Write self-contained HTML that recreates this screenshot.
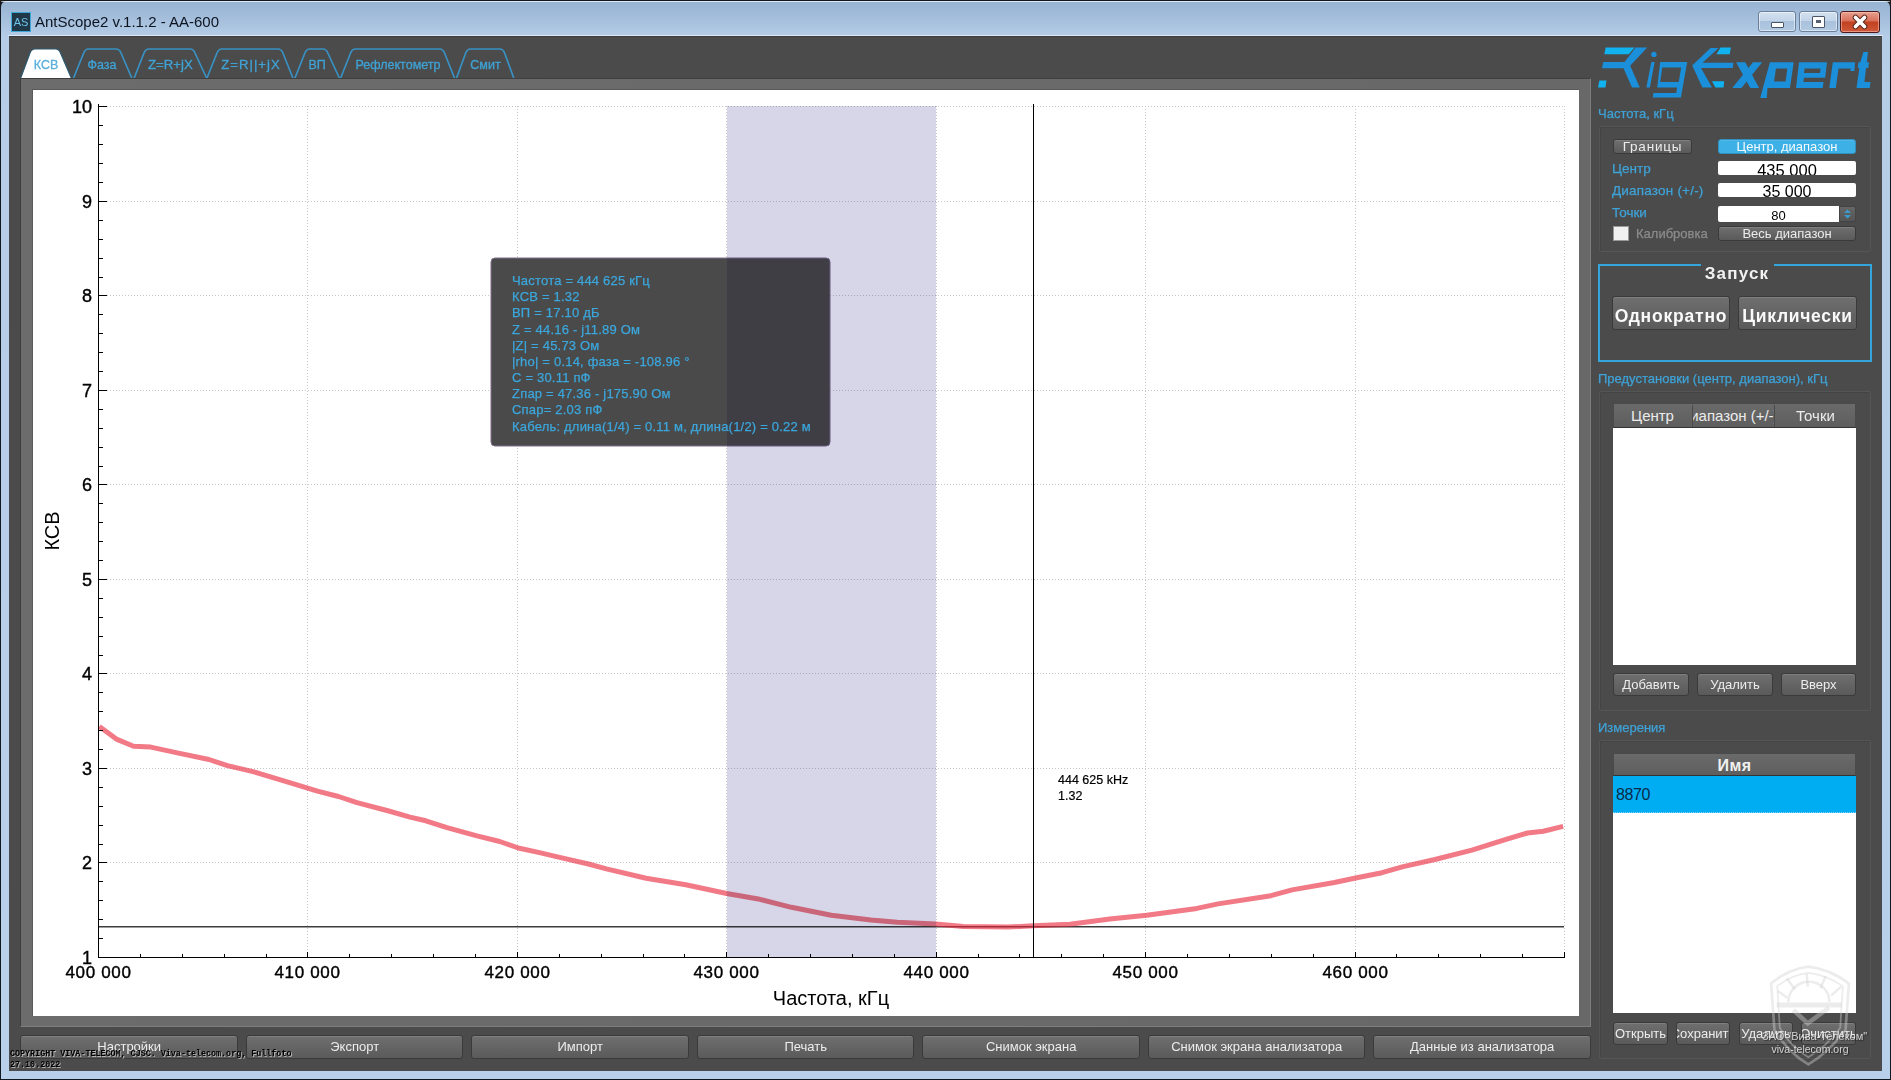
<!DOCTYPE html><html><head><meta charset="utf-8"><style>
*{margin:0;padding:0;box-sizing:border-box}
html,body{width:1891px;height:1080px;overflow:hidden;background:#1a1a1a}
body{position:relative;font-family:"Liberation Sans",sans-serif}
.a{position:absolute}
.btn{position:absolute;display:flex;justify-content:center;border:1px solid #3a3a3a;border-radius:3px;background:linear-gradient(#6f6f6f,#5a5a5a);color:#ececec;text-align:center;white-space:nowrap;overflow:hidden;box-shadow:inset 0 1px 0 rgba(255,255,255,0.12)}
.lbl{position:absolute;color:#3ea3d8;white-space:nowrap;-webkit-text-stroke:0.25px currentColor}
</style></head><body><div class="a" style="left:0;top:0;width:1891px;height:1080px;border:1px solid #101820;border-radius:7px 7px 0 0;background:linear-gradient(#97b3d3 0px,#a6c0dd 20px,#b5cde7 36px,#b8d0e9 100%)"></div><div class="a" style="left:1px;top:1px;width:1889px;height:1px;background:rgba(255,255,255,0.7);border-radius:6px 6px 0 0"></div><div class="a" style="left:8px;top:35px;width:1875px;height:1px;background:rgba(225,236,248,0.9)"></div><div class="a" style="left:9px;top:36px;width:1873px;height:1035px;background:#4b4b4b;border-top:1px solid #3c3c3c"></div><div class="a" style="left:11px;top:12px;width:20px;height:20px;background:#1f3746;border:1px solid #3fa6d8"></div><div class="a" style="left:11px;top:12px;width:20px;height:20px;color:#6ec3ea;font-size:11px;line-height:20px;text-align:center">AS</div><div class="a" style="left:35px;top:13px;color:#0c1420;font-size:15px;line-height:18px;white-space:nowrap">AntScope2 v.1.1.2 - AA-600</div><div class="a" style="left:1758px;top:11px;width:38px;height:21px;border:1px solid #6a7f99;border-radius:3px;background:linear-gradient(#d3e1f0 0%,#c3d5e9 45%,#a9c1dc 50%,#b3cae3 100%);box-shadow:inset 0 0 0 1px rgba(255,255,255,0.5)"></div><div class="a" style="left:1771px;top:22px;width:13px;height:6px;background:#fff;border:1px solid #4a5668;border-radius:1px"></div><div class="a" style="left:1799px;top:11px;width:39px;height:21px;border:1px solid #6a7f99;border-radius:3px;background:linear-gradient(#d3e1f0 0%,#c3d5e9 45%,#a9c1dc 50%,#b3cae3 100%);box-shadow:inset 0 0 0 1px rgba(255,255,255,0.5)"></div><div class="a" style="left:1812px;top:16px;width:13px;height:12px;background:#fff;border:1px solid #4a5668;border-radius:1px"></div><div class="a" style="left:1816px;top:20px;width:5px;height:3px;background:#556070"></div><div class="a" style="left:1840px;top:11px;width:40px;height:22px;border:1px solid #4a1a1a;border-radius:3px;background:linear-gradient(#e8a08e 0%,#d9705a 45%,#c2401f 50%,#d05a3a 100%);box-shadow:inset 0 0 0 1px rgba(255,210,200,0.5)"></div><svg class="a" style="left:1840px;top:11px" width="40" height="22"><path d="M15.5 6.5 L24.5 15.5 M24.5 6.5 L15.5 15.5" stroke="#5a2a20" stroke-width="5.6" stroke-linecap="round"/><path d="M15.5 6.5 L24.5 15.5 M24.5 6.5 L15.5 15.5" stroke="#fff" stroke-width="3.6" stroke-linecap="round"/></svg><svg class="a" style="left:0;top:0" width="600" height="90"><path d="M20.5,78.5 L30,53 Q31.5,49 35,49 L55.5,49 Q59.0,49 60.5,53 L71.5,78.5 Z" fill="#ffffff" stroke="#2c5a70" stroke-width="1.2"/><path d="M73.4,78.5 L83.7,53 Q85.2,49 88.7,49 L116,49 Q119.5,49 121,53 L132,78.5" fill="none" stroke="#3891c2" stroke-width="1.7"/><path d="M134,78.5 L144,53 Q145.5,49 149,49 L190,49 Q193.5,49 195,53 L206.8,78.5" fill="none" stroke="#3891c2" stroke-width="1.7"/><path d="M206.8,78.5 L217,53 Q218.5,49 222,49 L277.9,49 Q281.4,49 282.9,53 L293.1,78.5" fill="none" stroke="#3891c2" stroke-width="1.7"/><path d="M294.8,78.5 L304.9,53 Q306.4,49 309.9,49 L322.8,49 Q326.3,49 327.8,53 L339.6,78.5" fill="none" stroke="#3891c2" stroke-width="1.7"/><path d="M340.5,78.5 L350.6,53 Q352.1,49 355.6,49 L439.5,49 Q443.0,49 444.5,53 L454.7,78.5" fill="none" stroke="#3891c2" stroke-width="1.7"/><path d="M456.4,78.5 L465.7,53 Q467.2,49 470.7,49 L499.6,49 Q503.1,49 504.6,53 L513.9,78.5" fill="none" stroke="#3891c2" stroke-width="1.7"/><text x="46" y="68.8" text-anchor="middle" font-family="Liberation Sans" font-size="12.5" fill="#5bb0dc" stroke="#5bb0dc" stroke-width="0.3">КСВ</text><text x="102" y="68.8" text-anchor="middle" font-family="Liberation Sans" font-size="12.5" fill="#3fa3d6" stroke="#3fa3d6" stroke-width="0.3">Фаза</text><text x="170.4" y="68.8" text-anchor="middle" font-family="Liberation Sans" font-size="13.2" fill="#3fa3d6" stroke="#3fa3d6" stroke-width="0.3">Z=R+jX</text><text x="251" y="68.8" text-anchor="middle" font-family="Liberation Sans" font-size="13.2" letter-spacing="1" fill="#3fa3d6" stroke="#3fa3d6" stroke-width="0.3">Z=R||+jX</text><text x="317.1" y="68.8" text-anchor="middle" font-family="Liberation Sans" font-size="12.5" fill="#3fa3d6" stroke="#3fa3d6" stroke-width="0.3">ВП</text><text x="398" y="68.8" text-anchor="middle" font-family="Liberation Sans" font-size="12.5" fill="#3fa3d6" stroke="#3fa3d6" stroke-width="0.3">Рефлектометр</text><text x="485.5" y="68.8" text-anchor="middle" font-family="Liberation Sans" font-size="12.5" fill="#3fa3d6" stroke="#3fa3d6" stroke-width="0.3">Смит</text></svg><div class="a" style="left:20px;top:78px;width:1571px;height:949px;background:linear-gradient(90deg,#6c6c6c,#686868);border:1px solid #3e3e3e;border-right-color:#7e7e7e;border-bottom-color:#7e7e7e"></div><div class="a" style="left:32px;top:89px;width:1547px;height:927px;background:#5a5a5a"></div><div class="a" style="left:33px;top:90px;width:1546px;height:926px;background:#ffffff"></div><svg class="a" style="left:0;top:0" width="1600" height="1030" font-family="Liberation Sans"><path d="M107,862.5 H1565 M107,768.5 H1565 M107,673.5 H1565 M107,579.5 H1565 M107,484.5 H1565 M107,390.5 H1565 M107,295.5 H1565 M107,201.5 H1565 M107,106.5 H1565 M307.5,106 V952 M517.5,106 V952 M726.5,106 V952 M936.5,106 V952 M1145.5,106 V952 M1355.5,106 V952 M1564.5,106 V952" stroke="#c8c8c8" stroke-width="1" stroke-dasharray="1 2" fill="none" shape-rendering="crispEdges"/><path d="M98,926.7 H1564" stroke="#3c3c3c" stroke-width="1.6" fill="none"/><polyline points="99.3,726.4 116.4,739.1 133.6,746.3 150.8,747.1 177.3,752.9 209,759.5 227.5,765.6 254,771.9 296.2,784.6 317.4,791.2 338.5,796.5 357,802.6 388.8,811 410,817.1 425.8,820.8 447,827.7 476,835.6 499.8,841.5 518.3,848 539.5,852.6 560.7,857.6 588.4,864 606.4,868.9 646.1,878.2 685.8,884.8 726.7,893.5 759.8,899.3 791.5,907.3 831.2,915.2 870.9,920 897.3,922.3 935.6,923.9 963.4,926.6 1008.3,927.1 1033.5,925.8 1070,924.3 1109.7,919 1146.7,915.3 1196.9,908.4 1218,903.9 1271,895.7 1292.1,889.9 1334.4,882.5 1355.6,878 1382,872.7 1403.2,866.6 1434.9,859.5 1471.9,850.2 1503.6,840.2 1527.4,833 1543.3,831.2 1563.1,826.4" fill="none" stroke="rgba(232,40,60,0.62)" stroke-width="5" stroke-linejoin="round" stroke-linecap="butt"/><path d="M1033.5,104 V957" stroke="#000" stroke-width="1" fill="none" shape-rendering="crispEdges"/><path d="M98.5,104 V958 M98,957.5 H1565 M98,957.5 H107 M98,938.5 H103 M98,919.5 H103 M98,900.5 H103 M98,881.5 H103 M98,862.5 H107 M98,844.5 H103 M98,825.5 H103 M98,806.5 H103 M98,787.5 H103 M98,768.5 H107 M98,749.5 H103 M98,730.5 H103 M98,711.5 H103 M98,692.5 H103 M98,673.5 H107 M98,655.5 H103 M98,636.5 H103 M98,617.5 H103 M98,598.5 H103 M98,579.5 H107 M98,560.5 H103 M98,541.5 H103 M98,522.5 H103 M98,503.5 H103 M98,484.5 H107 M98,466.5 H103 M98,447.5 H103 M98,428.5 H103 M98,409.5 H103 M98,390.5 H107 M98,371.5 H103 M98,352.5 H103 M98,333.5 H103 M98,314.5 H103 M98,295.5 H107 M98,277.5 H103 M98,258.5 H103 M98,239.5 H103 M98,220.5 H103 M98,201.5 H107 M98,182.5 H103 M98,163.5 H103 M98,144.5 H103 M98,125.5 H103 M98,106.5 H107 M98.5,957 V952 M140.5,957 V954 M182.5,957 V954 M224.5,957 V954 M266.5,957 V954 M307.5,957 V952 M349.5,957 V954 M391.5,957 V954 M433.5,957 V954 M475.5,957 V954 M517.5,957 V952 M559.5,957 V954 M601.5,957 V954 M643.5,957 V954 M684.5,957 V954 M726.5,957 V952 M768.5,957 V954 M810.5,957 V954 M852.5,957 V954 M894.5,957 V954 M936.5,957 V952 M978.5,957 V954 M1019.5,957 V954 M1061.5,957 V954 M1103.5,957 V954 M1145.5,957 V952 M1187.5,957 V954 M1229.5,957 V954 M1271.5,957 V954 M1313.5,957 V954 M1355.5,957 V952 M1396.5,957 V954 M1438.5,957 V954 M1480.5,957 V954 M1522.5,957 V954 M1564.5,957 V952" stroke="#000" stroke-width="1" fill="none" shape-rendering="crispEdges"/><text x="92" y="964.0" text-anchor="end" font-size="18" fill="#000" stroke="#000" stroke-width="0.4">1</text><text x="92" y="869.0" text-anchor="end" font-size="18" fill="#000" stroke="#000" stroke-width="0.4">2</text><text x="92" y="775.0" text-anchor="end" font-size="18" fill="#000" stroke="#000" stroke-width="0.4">3</text><text x="92" y="680.0" text-anchor="end" font-size="18" fill="#000" stroke="#000" stroke-width="0.4">4</text><text x="92" y="586.0" text-anchor="end" font-size="18" fill="#000" stroke="#000" stroke-width="0.4">5</text><text x="92" y="491.0" text-anchor="end" font-size="18" fill="#000" stroke="#000" stroke-width="0.4">6</text><text x="92" y="397.0" text-anchor="end" font-size="18" fill="#000" stroke="#000" stroke-width="0.4">7</text><text x="92" y="302.0" text-anchor="end" font-size="18" fill="#000" stroke="#000" stroke-width="0.4">8</text><text x="92" y="208.0" text-anchor="end" font-size="18" fill="#000" stroke="#000" stroke-width="0.4">9</text><text x="92" y="113.0" text-anchor="end" font-size="18" fill="#000" stroke="#000" stroke-width="0.4">10</text><text x="98.5" y="978" text-anchor="middle" font-size="17" letter-spacing="0.65" fill="#000" stroke="#000" stroke-width="0.4">400 000</text><text x="307.5" y="978" text-anchor="middle" font-size="17" letter-spacing="0.65" fill="#000" stroke="#000" stroke-width="0.4">410 000</text><text x="517.5" y="978" text-anchor="middle" font-size="17" letter-spacing="0.65" fill="#000" stroke="#000" stroke-width="0.4">420 000</text><text x="726.5" y="978" text-anchor="middle" font-size="17" letter-spacing="0.65" fill="#000" stroke="#000" stroke-width="0.4">430 000</text><text x="936.5" y="978" text-anchor="middle" font-size="17" letter-spacing="0.65" fill="#000" stroke="#000" stroke-width="0.4">440 000</text><text x="1145.5" y="978" text-anchor="middle" font-size="17" letter-spacing="0.65" fill="#000" stroke="#000" stroke-width="0.4">450 000</text><text x="1355.5" y="978" text-anchor="middle" font-size="17" letter-spacing="0.65" fill="#000" stroke="#000" stroke-width="0.4">460 000</text><text x="831" y="1005" text-anchor="middle" font-size="20" fill="#000">Частота, кГц</text><text transform="translate(59,531) rotate(-90)" text-anchor="middle" font-size="20" fill="#000">КСВ</text><text x="1058" y="783.5" font-size="12.5" fill="#000" stroke="#000" stroke-width="0.2">444 625 kHz</text><text x="1058" y="799.5" font-size="12.5" fill="#000" stroke="#000" stroke-width="0.2">1.32</text><rect x="491" y="258" width="339" height="188" rx="4" fill="#4a4a4a" stroke="#806c8c" stroke-width="1"/><rect x="727" y="106" width="209" height="851" fill="#d6d6e8" style="mix-blend-mode:multiply"/><text x="512" y="285.0" font-size="13" letter-spacing="0.2" fill="#3ba7dd" stroke="#3ba7dd" stroke-width="0.25">Частота = 444 625 кГц</text><text x="512" y="301.2" font-size="13" letter-spacing="0.2" fill="#3ba7dd" stroke="#3ba7dd" stroke-width="0.25">КСВ = 1.32</text><text x="512" y="317.4" font-size="13" letter-spacing="0.2" fill="#3ba7dd" stroke="#3ba7dd" stroke-width="0.25">ВП = 17.10 дБ</text><text x="512" y="333.5" font-size="13" letter-spacing="0.2" fill="#3ba7dd" stroke="#3ba7dd" stroke-width="0.25">Z = 44.16 - j11.89 Ом</text><text x="512" y="349.7" font-size="13" letter-spacing="0.2" fill="#3ba7dd" stroke="#3ba7dd" stroke-width="0.25">|Z| = 45.73 Ом</text><text x="512" y="365.9" font-size="13" letter-spacing="0.2" fill="#3ba7dd" stroke="#3ba7dd" stroke-width="0.25">|rho| = 0.14, фаза = -108.96 °</text><text x="512" y="382.1" font-size="13" letter-spacing="0.2" fill="#3ba7dd" stroke="#3ba7dd" stroke-width="0.25">C = 30.11 пФ</text><text x="512" y="398.3" font-size="13" letter-spacing="0.2" fill="#3ba7dd" stroke="#3ba7dd" stroke-width="0.25">Zпар = 47.36 - j175.90 Ом</text><text x="512" y="414.4" font-size="13" letter-spacing="0.2" fill="#3ba7dd" stroke="#3ba7dd" stroke-width="0.25">Cпар= 2.03 пФ</text><text x="512" y="430.6" font-size="13" letter-spacing="0.2" fill="#3ba7dd" stroke="#3ba7dd" stroke-width="0.25">Кабель: длина(1/4) = 0.11 м, длина(1/2) = 0.22 м</text></svg><div class="btn" style="left:20.4px;top:1035px;width:217.6px;height:24px;font-size:13px;line-height:22px">Настройки</div><div class="btn" style="left:245.9px;top:1035px;width:217.6px;height:24px;font-size:13px;line-height:22px">Экспорт</div><div class="btn" style="left:471.4px;top:1035px;width:217.6px;height:24px;font-size:13px;line-height:22px">Импорт</div><div class="btn" style="left:696.9px;top:1035px;width:217.6px;height:24px;font-size:13px;line-height:22px">Печать</div><div class="btn" style="left:922.4px;top:1035px;width:217.6px;height:24px;font-size:13px;line-height:22px">Снимок экрана</div><div class="btn" style="left:1147.9px;top:1035px;width:217.6px;height:24px;font-size:13px;line-height:22px">Снимок экрана анализатора</div><div class="btn" style="left:1373.4px;top:1035px;width:217.6px;height:24px;font-size:13px;line-height:22px">Данные из анализатора</div><div class="a" style="left:1599px;top:126px;width:272px;height:126px;border:1px solid #555;border-radius:2px;box-shadow:inset 1px 1px 0 #444"></div><div class="a" style="left:1599px;top:391px;width:272px;height:320px;border:1px solid #555;border-radius:2px;box-shadow:inset 1px 1px 0 #444"></div><div class="a" style="left:1599px;top:740px;width:272px;height:319px;border:1px solid #555;border-radius:2px;box-shadow:inset 1px 1px 0 #444"></div><div class="lbl" style="left:1598px;top:105px;height:18px;line-height:18px;font-size:13px;color:#3ea3d8;">Частота, кГц</div><div class="btn" style="left:1613px;top:139px;width:79px;height:15px;font-size:13.5px;line-height:13px;letter-spacing:0.8px">Границы</div><div class="btn" style="left:1718px;top:139px;width:138px;height:15px;font-size:13px;line-height:13px;background:#3db0e6;border-color:#2f8fbf;color:#f4fbff">Центр, диапазон</div><div class="lbl" style="left:1612px;top:160px;height:18px;line-height:18px;font-size:13.5px;color:#3ea3d8;">Центр</div><div class="a" style="left:1718px;top:161px;width:138px;height:14px;background:#fff;border-radius:2px;overflow:hidden;text-align:center;font-size:16.5px;line-height:19px;color:#000">435 000</div><div class="lbl" style="left:1612px;top:181.5px;height:18px;line-height:18px;font-size:13.5px;color:#3ea3d8;letter-spacing:0.2px">Диапазон (+/-)</div><div class="a" style="left:1718px;top:183px;width:138px;height:14px;background:#fff;border-radius:2px;overflow:hidden;text-align:center;font-size:16px;line-height:17px;color:#000">35 000</div><div class="lbl" style="left:1612px;top:203.5px;height:18px;line-height:18px;font-size:13.5px;color:#3ea3d8;">Точки</div><div class="a" style="left:1718px;top:206px;width:121px;height:16px;background:#fff;border-radius:2px 0 0 2px;overflow:hidden;text-align:center;font-size:13px;line-height:20px;color:#000">80</div><div class="a" style="left:1839px;top:206px;width:17px;height:16px;background:linear-gradient(#666,#555);border:1px solid #444;border-radius:0 2px 2px 0"></div><svg class="a" style="left:1839px;top:206px" width="17" height="16"><path d="M5 7 L8.5 3.5 L12 7 Z M5 9 L8.5 12.5 L12 9 Z" fill="#3a9ccc"/></svg><div class="a" style="left:1613px;top:226px;width:16px;height:15px;background:#f0f0f0;border:1px solid #999"></div><div class="lbl" style="left:1636px;top:225px;height:18px;line-height:18px;font-size:13px;color:#8c8c8c;">Калибровка</div><div class="btn" style="left:1718px;top:226px;width:138px;height:15px;font-size:13px;line-height:13px;">Весь диапазон</div><div class="a" style="left:1598px;top:264px;width:274px;height:98px;border:2px solid #35a6dc"></div><div class="a" style="left:1701px;top:262px;width:73px;height:5px;background:#4b4b4b"></div><div class="a" style="left:1637px;top:264px;width:200px;text-align:center;font-size:17px;font-weight:bold;letter-spacing:1.2px;color:#f2f2f2;line-height:20px">Запуск</div><div class="btn" style="left:1612px;top:296px;width:118px;height:34px;font-size:17.5px;line-height:32px;font-weight:bold;color:#fafafa;letter-spacing:0.8px;padding-top:3px">Однократно</div><div class="btn" style="left:1738px;top:296px;width:119px;height:34px;font-size:17.5px;line-height:32px;font-weight:bold;color:#fafafa;letter-spacing:0.7px;padding-top:3px">Циклически</div><div class="lbl" style="left:1598px;top:369.5px;height:18px;line-height:18px;font-size:13px;color:#3ea3d8;">Предустановки (центр, диапазон), кГц</div><div class="a" style="left:1613px;top:403px;width:243px;height:25px;background:linear-gradient(#6a6a6a,#5e5e5e);border:1px solid #4a4a4a;border-bottom:1px solid #333"></div><div class="a" style="left:1692px;top:405px;width:1px;height:22px;background:#4a4a4a"></div><div class="a" style="left:1774px;top:405px;width:1px;height:22px;background:#4a4a4a"></div><div class="a" style="left:1613px;top:404px;width:79px;height:23px;text-align:center;font-size:15px;line-height:24px;color:#ececec">Центр</div><div class="a" style="left:1693px;top:404px;width:81px;height:23px;overflow:hidden;font-size:15px;line-height:24px;color:#ececec;white-space:nowrap"><span style="position:absolute;left:-13px">Диапазон (+/-)</span></div><div class="a" style="left:1775px;top:404px;width:81px;height:23px;text-align:center;font-size:15px;line-height:24px;color:#ececec">Точки</div><div class="a" style="left:1613px;top:428px;width:243px;height:237px;background:#fff"></div><div class="btn" style="left:1613px;top:673px;width:76px;height:23px;font-size:13px;line-height:21px;">Добавить</div><div class="btn" style="left:1697px;top:673px;width:76px;height:23px;font-size:13px;line-height:21px;">Удалить</div><div class="btn" style="left:1781px;top:673px;width:75px;height:23px;font-size:13px;line-height:21px;">Вверх</div><div class="lbl" style="left:1598px;top:719px;height:18px;line-height:18px;font-size:13px;color:#3ea3d8;">Измерения</div><div class="a" style="left:1613px;top:753px;width:243px;height:23px;background:linear-gradient(#6a6a6a,#5e5e5e);border:1px solid #4a4a4a;border-bottom:1px solid #333;text-align:center;font-size:16px;font-weight:bold;letter-spacing:0.5px;line-height:23px;color:#f0f0f0">Имя</div><div class="a" style="left:1613px;top:776px;width:243px;height:37px;background:#00adf2;border-bottom:1px dotted #7fd6f8;font-size:16px;letter-spacing:-0.4px;line-height:38px;color:#0b2a4a;padding-left:3px">8870</div><div class="a" style="left:1613px;top:813px;width:243px;height:200px;background:#fff"></div><div class="btn" style="left:1613px;top:1022px;width:55px;height:23px;font-size:13px;line-height:21px;">Открыть</div><div class="btn" style="left:1676px;top:1022px;width:54px;height:23px;font-size:13px;line-height:21px;text-indent:0;">Сохранить</div><div class="btn" style="left:1739px;top:1022px;width:54px;height:23px;font-size:13px;line-height:21px;">Удалить</div><div class="btn" style="left:1801px;top:1022px;width:55px;height:23px;font-size:13px;line-height:21px;">Очистить</div><svg class="a" style="left:0;top:0" width="1891" height="110"><polygon points="1605.7,47.6 1634.6,47.6 1628.7,54.2 1604.3,54.2" fill="#10b3f0"/><polygon points="1603.3,62 1624.6,62 1635.6,47.6 1647.2,47.6 1630.2,65.7 1639.8,87.5 1632,87.5 1623.5,68.3 1602,68.3" fill="#1b8fd9"/><polygon points="1599.4,80.5 1606.5,80.5 1605.4,87.5 1598,87.5" fill="#10b3f0"/><circle cx="1653.9" cy="54.4" r="2.7" fill="#1b8fd9"/><polygon points="1651.3,62 1654.6,62 1649.9,87.5 1646.4,87.5" fill="#1b8fd9"/><path fill-rule="evenodd" fill="#1b8fd9" d="M1660.2,62 L1687.2,62 L1680.9,97.5 L1652.7,97.5 L1653.5,93.1 L1676.2,93.1 L1677.1,87.5 L1657.2,87.5 Z M1662.3,67.5 L1681.2,67.5 L1678.7,82 L1660.2,82 Z"/><polygon points="1710.5,47.9 1718.6,47.9 1702.5,62.7 1733.5,62.7 1732.8,67.9 1701,67.9 1712,87.5 1702.4,87.5 1692.2,65.5" fill="#1b8fd9"/><polygon points="1720.5,47.6 1730.9,47.6 1729.7,54.2 1716.4,54.2" fill="#10b3f0"/><polygon points="1712,81.2 1724.2,81.2 1723.5,87.5 1715.4,87.5" fill="#10b3f0"/><polygon points="1736.1,62.3 1745.3,62.3 1759.1,88 1750.3,88" fill="#1b8fd9"/><polygon points="1753,62.3 1762.2,62.3 1741.5,88 1732.3,88" fill="#1b8fd9"/><path fill-rule="evenodd" fill="#1b8fd9" d="M1769.9,62.3 L1793.7,62.3 L1790,88 L1767.5,88 L1766.8,98 L1760.2,98 Z M1776,68.5 L1787.3,68.5 L1785.6,81.5 L1774,81.5 Z"/><path fill-rule="evenodd" fill="#1b8fd9" d="M1799,62.3 L1827,62.3 L1825.2,77.7 L1804,77.7 L1803.4,81.9 L1823.5,81.9 L1822.7,88 L1796,88 Z M1804.6,68.5 L1820.5,68.5 L1820,73.1 L1804,73.1 Z"/><polygon points="1832.8,62.3 1855,62.3 1854.4,71.1 1850.4,71.1 1850.8,68.5 1838.5,68.5 1835.8,88 1829.3,88" fill="#1b8fd9"/><polygon points="1863.4,52 1868,52 1866.8,62.3 1869,62.3 1868.3,68.1 1866.1,68.1 1864.4,81.9 1870.5,81.9 1869.8,88 1856.5,88 1859.4,68.1 1857.8,68.1 1858.5,62.3 1860.3,62.3" fill="#1b8fd9"/></svg><svg class="a" style="left:1760px;top:950px" width="110" height="120" viewBox="0 0 990 1080"><g fill="none" stroke="rgba(210,210,210,0.42)" stroke-linecap="butt"><path stroke-width="24" d="M100,300 Q260,170 435,150 Q620,170 800,300 L770,720 Q620,920 435,1030 Q250,920 130,720 Z"/><path stroke-width="16" d="M155,325 Q290,220 435,205 Q590,220 745,325 L722,700 Q600,870 435,965 Q270,870 178,700 Z"/><path stroke-width="22" d="M255,470 A185,185 0 0 1 625,470"/><path stroke-width="22" d="M160,370 L245,430 M240,255 L315,355 M420,215 L430,330 M590,235 L545,345 M730,330 L640,410"/><path stroke-width="45" d="M150,495 H735"/><path stroke-width="40" d="M300,540 L430,660 L620,520"/></g></svg><div class="a" style="left:1762px;top:1030px;width:100px;text-align:center;font-size:11px;line-height:13px;color:rgba(235,235,235,0.85);text-shadow:1px 1px 1px rgba(0,0,0,0.5);white-space:nowrap">ЗАО "Вива-Телеком"</div><div class="a" style="left:1760px;top:1042px;width:100px;text-align:center;font-size:10.5px;line-height:14px;color:rgba(235,235,235,0.85);text-shadow:1px 1px 1px rgba(0,0,0,0.5);white-space:nowrap">viva-telecom.org</div><div class="a" style="left:10px;top:1049px;font-family:'Liberation Mono',monospace;font-size:8.4px;font-weight:bold;line-height:10.5px;color:#000;text-shadow:1px 1px 0 rgba(255,255,255,0.55);white-space:pre">COPYRIGHT VIVA-TELECOM, CJSC. Viva-telecom.org, Fullfoto
27.10.2022</div></body></html>
